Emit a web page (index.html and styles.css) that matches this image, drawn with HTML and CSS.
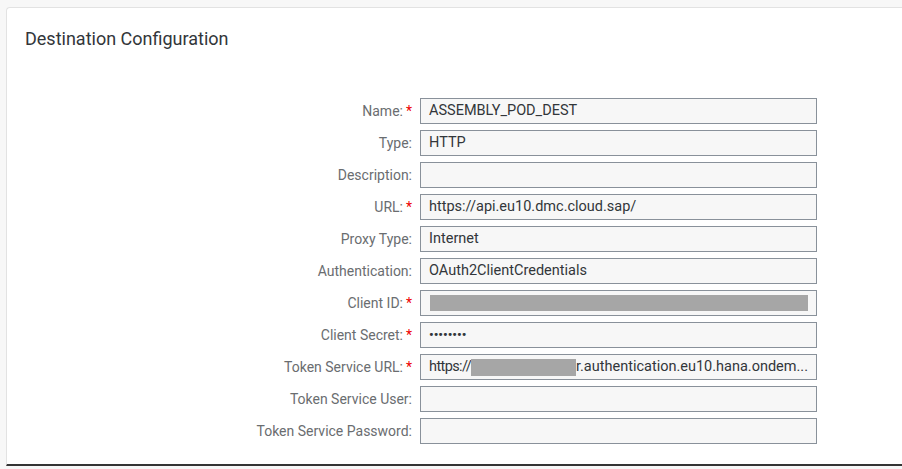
FILE: index.html
```html
<!DOCTYPE html>
<html>
<head>
<meta charset="utf-8">
<link rel="stylesheet" href="styles.css">
</head>
<body>
<div class="card">
  <h1 class="title">Destination Configuration</h1>
  <div class="form">
    <label class="lbl">Name:<span class="req">*</span></label>
    <div class="field">ASSEMBLY_POD_DEST</div>
    <label class="lbl">Type:</label>
    <div class="field">HTTP</div>
    <label class="lbl">Description:</label>
    <div class="field"></div>
    <label class="lbl">URL:<span class="req">*</span></label>
    <div class="field">https://api.eu10.dmc.cloud.sap/</div>
    <label class="lbl">Proxy Type:</label>
    <div class="field">Internet</div>
    <label class="lbl">Authentication:</label>
    <div class="field">OAuth2ClientCredentials</div>
    <label class="lbl">Client ID:<span class="req">*</span></label>
    <div class="field"><span class="redact redact-id"></span></div>
    <label class="lbl">Client Secret:<span class="req">*</span></label>
    <div class="field dots">••••••••</div>
    <label class="lbl">Token Service URL:<span class="req">*</span></label>
    <div class="field"><span class="scheme">https://</span><span class="redact redact-url"></span>r.authentication.eu10.hana.ondem...</div>
    <label class="lbl">Token Service User:</label>
    <div class="field"></div>
    <label class="lbl">Token Service Password:</label>
    <div class="field"></div>
  </div>
</div>
</body>
</html>
```

FILE: styles.css
```css
html, body {
  margin: 0;
  padding: 0;
  background: #f7f7f7;
  font-family: Roboto, "Liberation Sans", Arial, sans-serif;
}
.card {
  margin: 7px 0 0 6px;
  height: 459px;
  background: #fff;
  border: 1px solid #e2e2e2;
  border-right: none;
  border-bottom: 2px solid #343434;
  border-radius: 4px 0 0 0;
  box-sizing: border-box;
  padding: 21px 0 0 18px;
}
.title {
  margin: 0;
  font-size: 18px;
  font-weight: normal;
  color: #32363a;
  line-height: 20px;
}
.form {
  margin-top: 49px;
  display: grid;
  grid-template-columns: 387px 397px;
  column-gap: 8px;
  row-gap: 6px;
}
.lbl {
  font-size: 14px;
  color: #6a6d70;
  text-align: right;
  line-height: 26px;
  height: 26px;
  white-space: nowrap;
}
.req {
  color: #e00;
  margin-left: 3px;
  font-size: 14px;
}
.field {
  height: 26px;
  box-sizing: border-box;
  border: 1px solid #89919a;
  background: #f7f7f7;
  font-size: 14.5px;
  color: #32363a;
  line-height: 24px;
  padding: 0 8px;
  white-space: nowrap;
  overflow: hidden;
  display: flex;
  align-items: center;
}
.scheme {
  letter-spacing: -0.6px;
}
.redact {
  display: inline-block;
  background: #a6a6a6;
}
.redact-id {
  width: 381px;
  height: 16px;
  margin-left: 1px;
}
.redact-url {
  width: 108px;
  height: 17px;
}
.dots {
  font-size: 13px;
  font-weight: bold;
  letter-spacing: 0;
}
```
